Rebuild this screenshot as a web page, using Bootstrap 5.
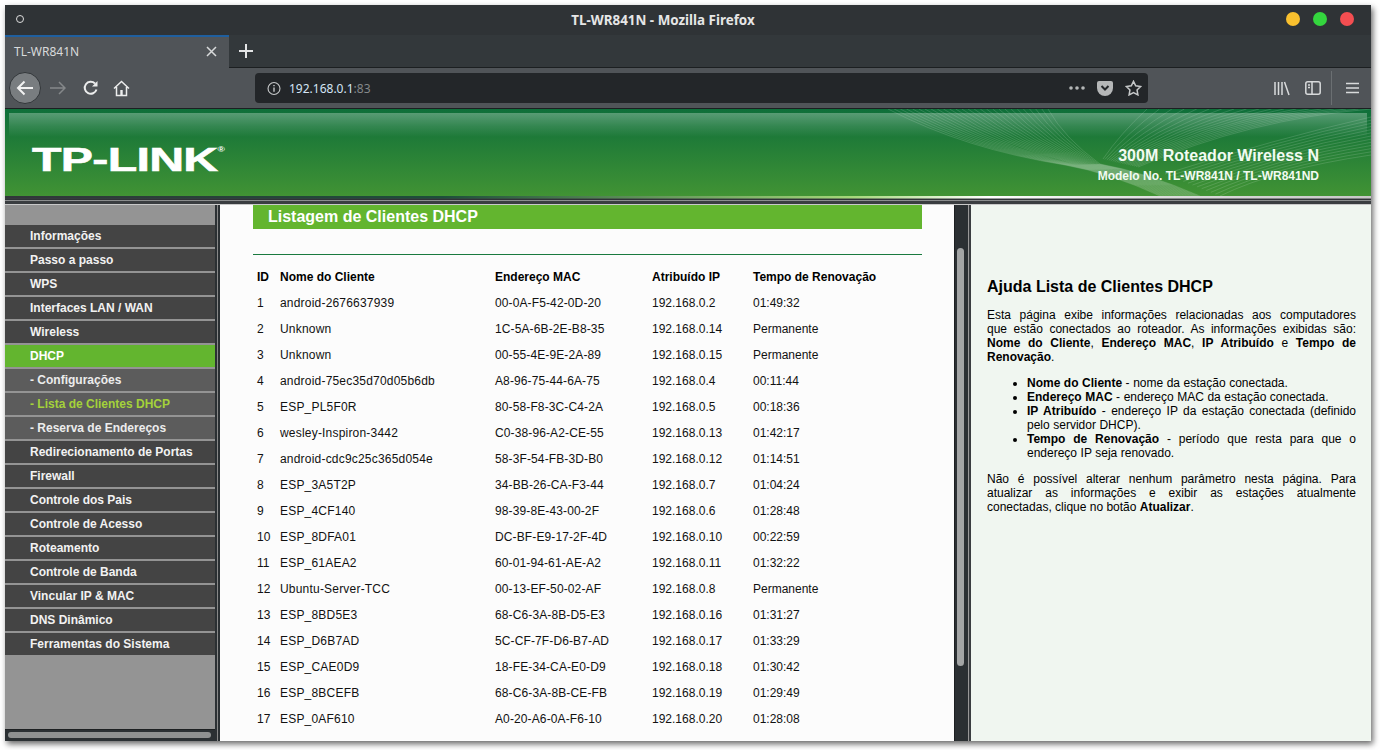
<!DOCTYPE html>
<html lang="pt">
<head>
  <meta charset="UTF-8" />
  <meta name="viewport" content="width=device-width, initial-scale=1">
  <title>TL-WR841N</title>
  <link href="https://cdn.jsdelivr.net/npm/bootstrap@5.3.0/dist/css/bootstrap.min.css" rel="stylesheet">
  <style>
    html, body {
      margin: 0;
      height: 100%;
      background: #fff;
      overflow: hidden;
      font-family: "Liberation Sans", Arial, sans-serif;
    }
    .win-shell {
      width: 1366px;
      height: 736px;
      margin: 5px 0 0 5px;
      box-shadow: 2px 3px 6px rgba(0,0,0,.6);
    }
    .title-bar {
      height: 30px;
      padding-right: 50px;
      background: #2f3336;
      color: #e6e6e6;
      font: bold 13.4px "Noto Sans", sans-serif;
    }
    .title-dot {
      left: 11px;
      top: 10px;
      width: 8px;
      height: 8px;
      border: 1.5px solid #ddd;
      border-radius: 50%;
    }
    .light-dot { width: 14px; height: 14px; border-radius: 50%; }
    .light-box { right: 17px; top: 7px; gap: 13px; }
    .tab-row { height: 33px; background: #33383b; }
    .tab-rest { border-bottom: 1px solid #1c1f21; padding-left: 10px; }
    .fx-tab {
      width: 224px;
      background: #505458;
      border-top: 2px solid #1f5f9f;
      color: #d8dadb;
      font: 12px "Noto Sans", sans-serif;
      padding: 0 12px 3px 9px;
    }
    .tool-row {
      height: 41px;
      background: #505458;
      border-bottom: 1px solid #1c1f21;
    }
    .back-btn {
      width: 32px;
      height: 32px;
      margin-left: 4px;
      border-radius: 50%;
      background: #797d80;
      border: 1px solid #33373a;
    }
    .fwd-ico { margin-left: 9px; }
    .reload-ico { margin-left: 17px; }
    .home-ico { margin-left: 14px; }
    .url-bar {
      left: 250px;
      top: 5px;
      width: 893px;
      height: 30px;
      background: #232629;
      border-radius: 4px;
      color: #d4e5f5;
      font: 12px "Noto Sans", sans-serif;
    }
    .url-port { color: #85888a; }
    .url-tools { margin-right: 6px; }
    .side-ico { margin-left: 15px; }
    .tool-sep { width: 1px; height: 34px; margin: 0 14px 0 10px; background: #6b6f72; }
    .tool-menu { margin-right: 12px; }
    .banner-wrap {
      height: 87px;
      background: linear-gradient(#0f6f3a 0, #1e7a38 28px, #419334 87px);
    }
    .banner-gloss {
      left: 4px;
      right: 4px;
      top: 4px;
      height: 24px;
      background: linear-gradient(rgba(255,255,255,.3), rgba(255,255,255,.12) 55%, rgba(255,255,255,0));
    }
    .banner-waves { left: 0; top: 0; }
    .tp-logo {
      left: 27px;
      top: 24px;
      color: #fff;
      font: 900 34px/34px "Liberation Sans", sans-serif;
      -webkit-text-stroke: .6px #fff;
      transform: scaleX(1.42);
      transform-origin: 0 0;
      letter-spacing: -.5px;
    }
    .tp-reg { font-size: 7px; vertical-align: 19px; -webkit-text-stroke: 0; letter-spacing: 0; }
    .model-box {
      right: 52px;
      top: 37px;
      color: #f2fbf2;
      text-align: right;
      font-weight: bold;
    }
    .model-name { font-size: 16px; line-height: 20px; }
    .model-no { font-size: 12px; line-height: 20px; }
    .sep-band {
      height: 9px;
      background:
        linear-gradient(#2f3336, #2f3336) 0 2.5px / 100% 1px no-repeat,
        linear-gradient(#8b8d8e, #8b8d8e) 0 3.5px / 100% 1px no-repeat,
        linear-gradient(90deg, #32363a 0, #1d4f3a 32%, #a5d87a 62%, #fff 72%, #dcdcdc 85%, #c8c8c8 100%) 0 0 / 100% 2.5px no-repeat,
        #3a3d40;
      border-bottom: 1px solid #c9c9c9;
    }
    .frame-row { height: 536px; }
    .side-pane {
      width: 210px;
      background: #949494;
      padding-top: 20px;
    }
    .side-menu { gap: 2px; }
    .side-link {
      height: 22px;
      line-height: 23px;
      padding: 0 0 0 25px;
      background: #444;
      color: #f2f2f2;
      font-size: 12px;
      font-weight: bold;
      text-decoration: none;
    }
    .side-link.is-open { background: #63b52f; color: #fff; }
    .side-link.is-sub { background: #5c5c5c; color: #ececec; }
    .side-link.is-here { color: #a4d23a; }
    .side-scroll {
      left: 0;
      right: 0;
      bottom: 0;
      height: 12px;
      background: #2b3033;
      border-top: 1px solid #1d2022;
    }
    .side-thumb {
      left: 3px;
      top: 2px;
      width: 203px;
      height: 6px;
      border-radius: 3px;
      background: #8f9191;
    }
    .frame-gap { width: 5px; background: #2b3033; padding-left: 2px; }
    .frame-gap::after { content: ""; display: block; width: 1px; height: 100%; background: #888; }
    .main-pane {
      width: 734px;
      background: #fcfcfc;
      padding: 0 32px 0 33px;
      overflow: hidden;
    }
    .list-head {
      height: 24px;
      line-height: 24px;
      background: #63b52f;
      color: #fff;
      font-size: 16px;
      font-weight: bold;
      padding-left: 15px;
    }
    .list-rule { height: 1px; margin-top: 25px; background: #1a7a3f; }
    .client-table { width: 669px; margin-top: 9px; table-layout: fixed; color: #111; font-size: 12px; border-collapse: collapse; }
    .client-table th, .client-table td { padding: 0 0 0 4px; height: 26px; vertical-align: middle; white-space: nowrap; font-size: 12px; }
    .client-table th { color: #000; font-weight: bold; }
    .client-table td:nth-child(2) { letter-spacing: .2px; }
    .client-table td:nth-child(3) { letter-spacing: .12px; }
    .v-scroll { width: 14px; background: #2b3033; border-left: 1px solid #1d2022; }
    .v-thumb { left: 2px; top: 43px; width: 7px; height: 418px; border-radius: 4px; background: #a3a5a5; }
    .frame-line { width: 3px; background: #3a3d40; border-left: 1px solid #999; }
    .help-pane {
      width: 400px;
      background: #f0f6f0;
      padding: 72px 15px 0 16px;
      color: #000;
      font-size: 12px;
      line-height: 14px;
    }
    .help-title { font-size: 16px; font-weight: bold; line-height: 20px; margin: 0 0 11px; color: #000; }
    .help-text { text-align: justify; margin: 0 0 12px; }
    .help-intro { word-spacing: 1.6px; }
    .help-list { margin: 0 0 12px; padding-left: 40px; text-align: justify; word-spacing: .2px; }
  </style>
</head>
<body>
<div class="win-shell d-flex flex-column">

  <div class="title-bar position-relative d-flex align-items-center justify-content-center">
    <span class="title-dot position-absolute"></span>
    TL-WR841N - Mozilla Firefox
    <div class="light-box position-absolute d-flex">
      <span class="light-dot" style="background:#f9c02e"></span>
      <span class="light-dot" style="background:#34d63e"></span>
      <span class="light-dot" style="background:#f34e51"></span>
    </div>
  </div>

  <div class="tab-row d-flex">
    <div class="fx-tab d-flex align-items-center justify-content-between">
      <span>TL-WR841N</span>
      <svg width="11" height="11" viewBox="0 0 11 11" stroke="#d8dadb" stroke-width="1.5"><path d="M1 1l9 9M10 1l-9 9"/></svg>
    </div>
    <div class="tab-rest flex-grow-1 d-flex align-items-center">
      <svg width="14" height="14" viewBox="0 0 14 14" stroke="#e4e5e6" stroke-width="2"><path d="M7 0v14M0 7h14"/></svg>
    </div>
  </div>

  <div class="tool-row position-relative d-flex align-items-center">
    <div class="back-btn d-flex align-items-center justify-content-center">
      <svg width="18" height="16" viewBox="0 0 18 16" fill="none" stroke="#f2f2f2" stroke-width="2"><path d="M17 8H2M8.500 1.500L2 8l6.500 6.500"/></svg>
    </div>
    <svg class="fwd-ico" width="16" height="14" viewBox="0 0 16 14" fill="none" stroke="#85888a" stroke-width="1.500"><path d="M0 7h15M9 1l6 6-6 6"/></svg>
    <svg class="reload-ico" width="16" height="16" viewBox="0 0 16 16" fill="none" stroke="#eceded" stroke-width="2"><path d="M13.500 9.500A6 6 0 1 1 12 3.500"/><path d="M14.500 1v5.500H9z" fill="#eceded" stroke="none"/></svg>
    <svg class="home-ico" width="17" height="17" viewBox="0 0 17 17" fill="none" stroke="#eceded" stroke-width="1.500"><path d="M1 8.500L8.500 1.500l7.500 7M3.500 7v8.500h10V7"/><rect x="7.300" y="10" width="2.400" height="5.500" fill="#eceded" stroke="none"/></svg>

    <div class="url-bar position-absolute d-flex align-items-center ps-2">
      <svg class="ms-1" width="14" height="15" viewBox="0 0 15 15" fill="none" stroke="#c6c8c9" stroke-width="1.200"><circle cx="7.500" cy="7.500" r="6.400"/><path d="M7.500 6.500v4.500M7.500 3.800v1.400" stroke-width="1.500"/></svg>
      <span class="ms-2"><span>192.168.0.1</span><span class="url-port">:83</span></span>
      <div class="url-tools ms-auto d-flex align-items-center gap-2">
        <svg width="16" height="4" viewBox="0 0 16 4" fill="#b5b7b8"><circle cx="2" cy="2" r="1.800"/><circle cx="8" cy="2" r="1.800"/><circle cx="14" cy="2" r="1.800"/></svg>
        <svg class="ms-1" width="16" height="15" viewBox="0 0 16 15"><path d="M2 0h12a2 2 0 0 1 2 2v5a8 8 0 0 1-16 0V2a2 2 0 0 1 2-2z" fill="#b5b7b8"/><path d="M4.500 5L8 8.500 11.500 5" fill="none" stroke="#232629" stroke-width="2"/></svg>
        <svg class="ms-1" width="17" height="16" viewBox="0 0 17 16" fill="none" stroke="#c6c8c9" stroke-width="1.500"><path d="M8.500 1.300l2.200 4.500 4.900.7-3.550 3.500.85 4.900-4.400-2.300-4.400 2.300.85-4.900L1.400 6.500l4.900-.7z"/></svg>
      </div>
    </div>

    <div class="ms-auto d-flex align-items-center">
      <svg width="16" height="15" viewBox="0 0 16 15" fill="none" stroke="#d8dadb" stroke-width="1.500"><path d="M1 1v13M4.500 1v13M8 1v13M10.500 1l4.500 13"/></svg>
      <svg class="side-ico" width="16" height="14" viewBox="0 0 16 14" fill="none" stroke="#d8dadb" stroke-width="1.500"><rect x=".8" y=".8" width="14.400" height="12.400" rx="2"/><path d="M7 1v12M3 4h2M3 6.500h2" /></svg>
      <span class="tool-sep"></span>
      <svg class="tool-menu" width="13" height="12" viewBox="0 0 13 12" stroke="#d8dadb" stroke-width="1.600"><path d="M0 1.500h13M0 6h13M0 10.500h13"/></svg>
    </div>
  </div>

  <div class="banner-wrap position-relative overflow-hidden">
    <div class="banner-gloss position-absolute"></div>
    <svg class="banner-waves position-absolute" id="waves" width="1366" height="87" viewBox="0 0 1366 87" fill="none" stroke="#ffffff" stroke-width=".6" stroke-opacity=".24"></svg>
    <div class="tp-logo position-absolute">TP-LINK<span class="tp-reg">®</span></div>
    <div class="model-box position-absolute">
      <div class="model-name">300M Roteador Wireless N</div>
      <div class="model-no">Modelo No. TL-WR841N / TL-WR841ND</div>
    </div>
  </div>
  <div class="sep-band"></div>

  <div class="frame-row d-flex">
    <div class="side-pane position-relative">
      <nav class="nav flex-column side-menu">
        <a class="side-link" href="#">Informações</a>
        <a class="side-link" href="#">Passo a passo</a>
        <a class="side-link" href="#">WPS</a>
        <a class="side-link" href="#">Interfaces LAN / WAN</a>
        <a class="side-link" href="#">Wireless</a>
        <a class="side-link is-open" href="#">DHCP</a>
        <a class="side-link is-sub" href="#">- Configurações</a>
        <a class="side-link is-sub is-here" href="#">- Lista de Clientes DHCP</a>
        <a class="side-link is-sub" href="#">- Reserva de Endereços</a>
        <a class="side-link" href="#">Redirecionamento de Portas</a>
        <a class="side-link" href="#">Firewall</a>
        <a class="side-link" href="#">Controle dos Pais</a>
        <a class="side-link" href="#">Controle de Acesso</a>
        <a class="side-link" href="#">Roteamento</a>
        <a class="side-link" href="#">Controle de Banda</a>
        <a class="side-link" href="#">Vincular IP &amp; MAC</a>
        <a class="side-link" href="#">DNS Dinâmico</a>
        <a class="side-link" href="#">Ferramentas do Sistema</a>
      </nav>
      <div class="side-scroll position-absolute"><div class="side-thumb position-absolute"></div></div>
    </div>
    <div class="frame-gap"></div>

    <div class="main-pane">
      <div class="list-head">Listagem de Clientes DHCP</div>
      <div class="list-rule"></div>
      <table class="client-table" id="clients">
        <colgroup><col style="width:23px"><col style="width:215px"><col style="width:157px"><col style="width:101px"><col></colgroup>
        <thead><tr><th>ID</th><th>Nome do Cliente</th><th>Endereço MAC</th><th>Atribuído IP</th><th>Tempo de Renovação</th></tr></thead>
        <tbody></tbody>
      </table>
    </div>

    <div class="v-scroll position-relative"><div class="v-thumb position-absolute"></div></div>
    <div class="frame-line"></div>

    <div class="help-pane">
      <h1 class="help-title">Ajuda Lista de Clientes DHCP</h1>
      <p class="help-text help-intro">Esta página exibe informações relacionadas aos computadores que estão conectados ao roteador. As informações exibidas são: <b>Nome do Cliente</b>, <b>Endereço MAC</b>, <b>IP Atribuído</b> e <b>Tempo de Renovação</b>.</p>
      <ul class="help-list">
        <li><b>Nome do Cliente</b> - nome da estação conectada.</li>
        <li><b>Endereço MAC</b> - endereço MAC da estação conectada.</li>
        <li><b>IP Atribuído</b> - endereço IP da estação conectada (definido pelo servidor DHCP).</li>
        <li><b>Tempo de Renovação</b> - período que resta para que o endereço IP seja renovado.</li>
      </ul>
      <p class="help-text">Não é possível alterar nenhum parâmetro nesta página. Para atualizar as informações e exibir as estações atualmente conectadas, clique no botão <b>Atualizar</b>.</p>
    </div>
  </div>
</div>

<script>
const clients = [
  ["android-2676637939", "00-0A-F5-42-0D-20", "192.168.0.2", "01:49:32"],
  ["Unknown", "1C-5A-6B-2E-B8-35", "192.168.0.14", "Permanente"],
  ["Unknown", "00-55-4E-9E-2A-89", "192.168.0.15", "Permanente"],
  ["android-75ec35d70d05b6db", "A8-96-75-44-6A-75", "192.168.0.4", "00:11:44"],
  ["ESP_PL5F0R", "80-58-F8-3C-C4-2A", "192.168.0.5", "00:18:36"],
  ["wesley-Inspiron-3442", "C0-38-96-A2-CE-55", "192.168.0.13", "01:42:17"],
  ["android-cdc9c25c365d054e", "58-3F-54-FB-3D-B0", "192.168.0.12", "01:14:51"],
  ["ESP_3A5T2P", "34-BB-26-CA-F3-44", "192.168.0.7", "01:04:24"],
  ["ESP_4CF140", "98-39-8E-43-00-2F", "192.168.0.6", "01:28:48"],
  ["ESP_8DFA01", "DC-BF-E9-17-2F-4D", "192.168.0.10", "00:22:59"],
  ["ESP_61AEA2", "60-01-94-61-AE-A2", "192.168.0.11", "01:32:22"],
  ["Ubuntu-Server-TCC", "00-13-EF-50-02-AF", "192.168.0.8", "Permanente"],
  ["ESP_8BD5E3", "68-C6-3A-8B-D5-E3", "192.168.0.16", "01:31:27"],
  ["ESP_D6B7AD", "5C-CF-7F-D6-B7-AD", "192.168.0.17", "01:33:29"],
  ["ESP_CAE0D9", "18-FE-34-CA-E0-D9", "192.168.0.18", "01:30:42"],
  ["ESP_8BCEFB", "68-C6-3A-8B-CE-FB", "192.168.0.19", "01:29:49"],
  ["ESP_0AF610", "A0-20-A6-0A-F6-10", "192.168.0.20", "01:28:08"]
];
const tbody = document.querySelector("#clients tbody");
clients.forEach((c, i) => {
  const tr = document.createElement("tr");
  [i + 1, ...c].forEach(v => {
    const td = document.createElement("td");
    td.textContent = v;
    tr.appendChild(td);
  });
  tbody.appendChild(tr);
});

// banner line art, three fans of thin curves
let d = "";
for (let i = 0; i <= 26; i++) {
  const t = i / 26;
  const mx = 1060 + 35 * t, my = 56 - t;
  d += `M${883 + 160 * t} 0Q${960 + 100 * t} ${40 - 10 * t} ${mx} ${my}Q${mx + 45} ${my + 8} ${1155 + 40 * t} 87`;
}
for (let i = 0; i <= 18; i++) {
  const t = i / 18;
  d += `M${1142 + 224 * t} 0Q${1115 + 130 * t} ${25 - 15 * t} ${1098 + 35 * t} ${50 + 8 * t}`;
}
for (let i = 0; i <= 12; i++) {
  const t = i / 12;
  d += `M1366 ${8 + 38 * t}Q1270 ${30 + 30 * t} ${1160 + 55 * t} ${65 + 22 * t}`;
}
const wave = document.createElementNS("http://www.w3.org/2000/svg", "path");
wave.setAttribute("d", d);
document.getElementById("waves").appendChild(wave);
</script>
<script src="https://cdn.jsdelivr.net/npm/bootstrap@5.3.0/dist/js/bootstrap.bundle.min.js"></script>
</body>
</html>
